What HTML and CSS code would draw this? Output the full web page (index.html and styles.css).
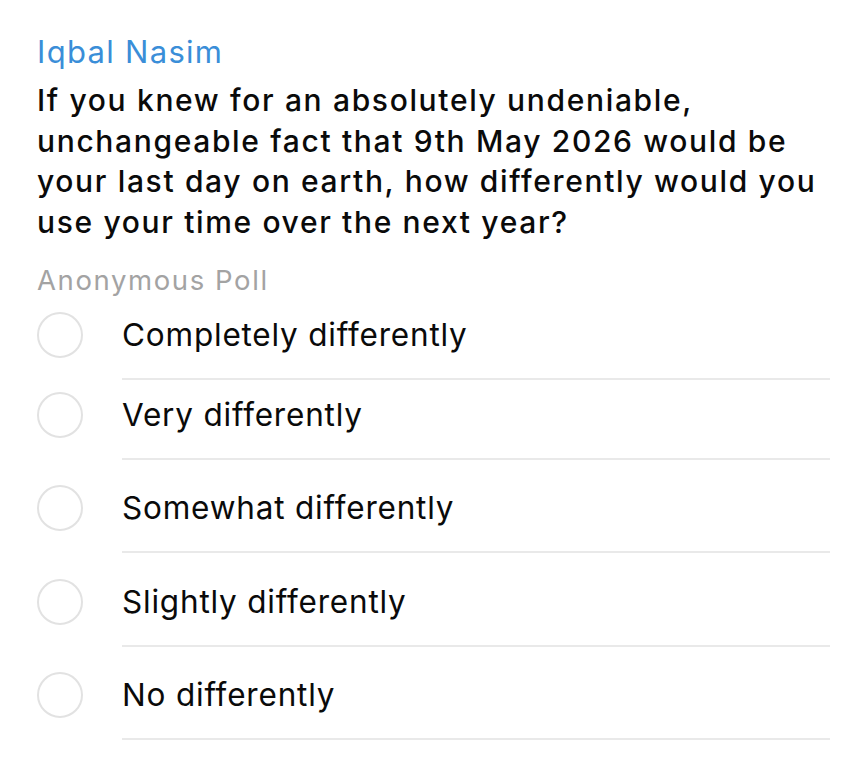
FILE: index.html
```html
<!DOCTYPE html>
<html>
<head>
<meta charset="utf-8">
<link rel="stylesheet" href="styles.css">
</head>
<body>
<div class="poll">
  <div class="author">Iqbal Nasim</div>
  <div class="question">If you knew for an absolutely undeniable, unchangeable fact that 9th May 2026 would be your last day on earth, how differently would you use your time over the next year?</div>
  <div class="type">Anonymous Poll</div>
  <div class="options">
    <div class="option first"><span class="radio"></span><span class="label">Completely differently</span><span class="rule"></span></div>
    <div class="option second"><span class="radio"></span><span class="label">Very differently</span><span class="rule"></span></div>
    <div class="option"><span class="radio"></span><span class="label">Somewhat differently</span><span class="rule"></span></div>
    <div class="option"><span class="radio"></span><span class="label">Slightly differently</span><span class="rule"></span></div>
    <div class="option"><span class="radio"></span><span class="label">No differently</span><span class="rule"></span></div>
  </div>
</div>
</body>
</html>
```
FILE: styles.css
```css
html, body {
  margin: 0;
  padding: 0;
  background: #ffffff;
}
body {
  font-family: Inter, "Noto Sans", "Liberation Sans", sans-serif;
  color: #000;
}
.poll {
  padding: 32px 28px 0 37px;
}
.author {
  font-size: 31px;
  line-height: 40px;
  letter-spacing: 1.3px;
  color: #3a8ed8;
}
.question {
  font-size: 30px;
  font-weight: 500;
  line-height: 40.5px;
  letter-spacing: 1.65px;
  margin-top: 8px;
  color: #0a0a0a;
}
.type {
  font-size: 27.5px;
  line-height: 36px;
  letter-spacing: 1.6px;
  color: #a3a3a3;
  margin-top: 20px;
}
.options {
  display: flex;
  flex-direction: column;
}
.option {
  display: grid;
  grid-template-columns: 85px 1fr;
  align-items: center;
  padding-top: 25.33px;
}
.option.first {
  padding-top: 14px;
}
.option.second {
  padding-top: 12px;
}
.radio {
  width: 42px;
  height: 42px;
  border: 2px solid #e2e2e2;
  border-radius: 50%;
}
.label {
  font-size: 31.5px;
  line-height: 46px;
  letter-spacing: 0.8px;
  color: #0a0a0a;
}
.rule {
  grid-column: 2;
  height: 2px;
  margin-top: 20px;
  background: #e9e9e9;
}
```
